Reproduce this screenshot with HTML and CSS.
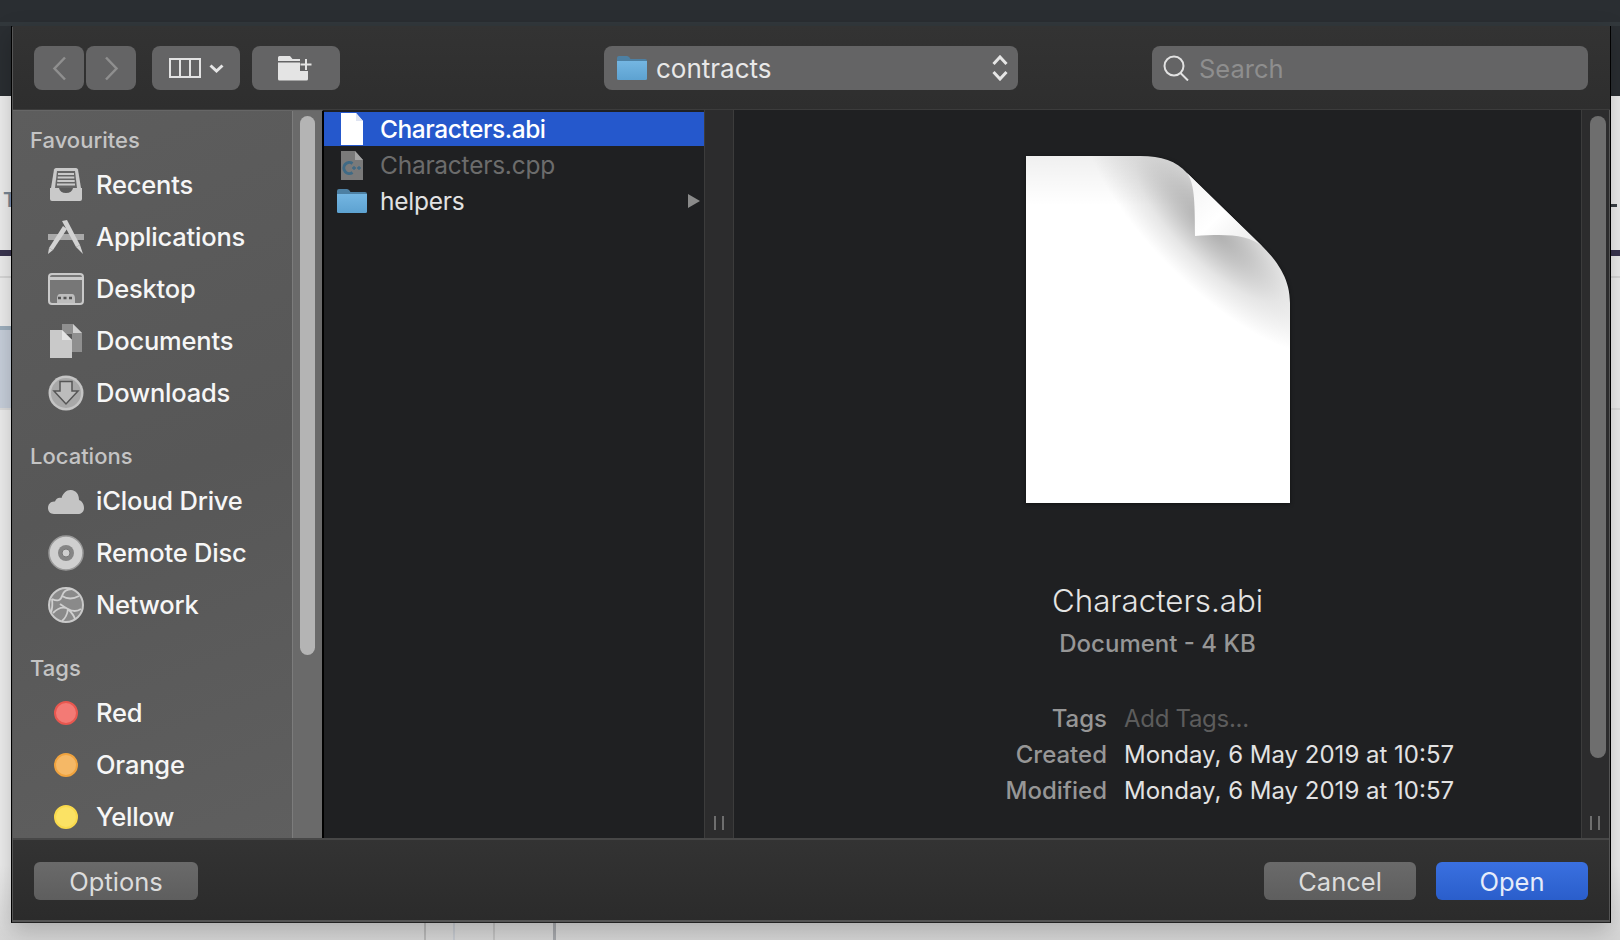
FILE: index.html
```html
<!DOCTYPE html>
<html lang="en">
<head>
  <meta charset="UTF-8" />
  <title>Open</title>
  <link rel="stylesheet" href="styles.css">
</head>
<body>

<!-- page behind the dialog -->
<div class="backdrop">
  <div class="bg-top"></div>
  <div class="bg-top-edge"></div>
  <div class="bg-header"></div>
  <div class="bg-title"><span>T</span><span class="bg-dash"></span></div>
  <div class="bg-rule"></div>
  <div class="bg-line"></div>
  <div class="bg-selected"></div>
  <div class="bg-selected-end"></div>
  <div class="bg-columns">
    <span class="bg-col bg-col-a"></span>
    <span class="bg-col bg-col-b"></span>
    <span class="bg-col bg-col-c"></span>
    <span class="bg-col bg-col-d"></span>
  </div>
</div>

<!-- open dialog -->
<div class="dialog">
  <div class="toolbar">
    <button class="tool tool-nav">
      <svg width="15" height="25" viewBox="0 0 15 25"><path d="M13 1.500 2.500 12.500 13 23.500" class="ico-dim"/></svg>
    </button>
    <button class="tool tool-nav tool-next">
      <svg width="15" height="25" viewBox="0 0 15 25"><path d="M2 1.500 12.500 12.500 2 23.500" class="ico-dim"/></svg>
    </button>
    <button class="tool tool-view">
      <svg width="32" height="20" viewBox="0 0 32 20"><path d="M1 1h30v18H1zM11 1v18M21 1v18" class="ico-line"/></svg>
      <svg width="15" height="9" viewBox="0 0 15 9"><path d="M1.500 1.500 7.500 7 13.500 1.500" class="ico-bold"/></svg>
    </button>
    <button class="tool tool-folder">
      <svg width="36" height="26" viewBox="0 0 36 26">
        <path d="M0 2.500Q0 1 1.500 1H12L14.500 4H22V6H0Z" fill="#e4e4e4"/>
        <path d="M0 7.500H22V16H30V24Q30 25.500 28.500 25.500H1.500Q0 25.500 0 24Z" fill="#e4e4e4"/>
        <path d="M28 4V15M22.500 9.500H33.500" stroke="#e4e4e4" stroke-width="2" fill="none"/>
      </svg>
    </button>
    <div class="popup">
      <svg class="folder-ico" width="30" height="24" viewBox="0 0 30 24"><use href="#folder"/></svg>
      <span class="popup-name">contracts</span>
      <svg class="popup-arrows" width="16" height="26" viewBox="0 0 16 26"><path d="M1.500 9 8 2 14.500 9M1.500 17 8 24 14.500 17" class="ico-bold"/></svg>
    </div>
    <div class="search">
      <svg width="26" height="26" viewBox="0 0 26 26"><circle cx="11" cy="11" r="9.500" class="ico-line"/><path d="M17.500 18 25 25.500" class="ico-line"/></svg>
      <span class="search-hint">Search</span>
    </div>
  </div>

  <div class="main">
    <div class="sidebar">
      <div class="side-list">
        <div class="side-head">Favourites</div>
        <div class="side-row">
          <span class="side-ico"><svg width="36" height="34" viewBox="0 0 36 34">
            <path d="M6 1.500Q6.500 0 8 0H28Q29.500 0 30 1.500L33 20H3Z" fill="#c9c9c9"/>
            <path d="M9 3H27L29 20H7Z" fill="#666"/>
            <path d="M10 6H26M9.700 9.500H26.300M9.300 13H26.700M9 16.500H27" stroke="#c9c9c9" stroke-width="1.800"/>
            <path d="M2 20H11Q12 25 18 25T25 20H34V31Q34 33 32 33H4Q2 33 2 31Z" fill="#c9c9c9"/>
          </svg></span>
          <span class="side-name">Recents</span>
        </div>
        <div class="side-row">
          <span class="side-ico"><svg width="36" height="34" viewBox="0 0 36 34">
            <path d="M0 14H36V20H0Z" fill="#a9a9a9"/>
            <path d="M14 1 19 0 32 25 28 27Z" fill="#d2d2d2"/>
            <path d="M28 27 32 25 35 34 Z" fill="#d2d2d2"/>
            <path d="M15 6 19 9 5 30 1 28Z" fill="#d2d2d2"/>
            <path d="M1 28 5 30 0 34Z" fill="#d2d2d2"/>
          </svg></span>
          <span class="side-name">Applications</span>
        </div>
        <div class="side-row">
          <span class="side-ico"><svg width="36" height="32" viewBox="0 0 36 32">
            <rect x="1" y="1" width="34" height="30" rx="3" fill="#777" stroke="#c9c9c9" stroke-width="2"/>
            <path d="M1 5.500H35" stroke="#c9c9c9" stroke-width="3"/>
            <path d="M9 26Q9 21 12 21H24Q27 21 27 26V30H9Z" fill="#bdbdbd"/>
            <path d="M10 25H26" stroke="#555" stroke-width="2.500" stroke-dasharray="3 2.500"/>
          </svg></span>
          <span class="side-name">Desktop</span>
        </div>
        <div class="side-row">
          <span class="side-ico"><svg width="36" height="34" viewBox="0 0 36 34">
            <path d="M14 0H25L34 9V28H24V10H14Z" fill="#8f8f8f"/>
            <path d="M25 0 34 9H25Z" fill="#d0d0d0"/>
            <path d="M2 6H14L24 16V34H2Z" fill="#c9c9c9"/>
            <path d="M14 6 24 16H14Z" fill="#e4e4e4"/>
          </svg></span>
          <span class="side-name">Documents</span>
        </div>
        <div class="side-row">
          <span class="side-ico"><svg width="36" height="36" viewBox="0 0 36 36">
            <circle cx="18" cy="18" r="17.500" fill="#c4c4c4"/>
            <circle cx="18" cy="18" r="15" fill="#a8a8a8"/>
            <path d="M12 6.500H24V16H30L18 29 6 16H12Z" fill="#bcbcbc" stroke="#555" stroke-width="1.500"/>
          </svg></span>
          <span class="side-name">Downloads</span>
        </div>

        <div class="side-head side-head-gap">Locations</div>
        <div class="side-row">
          <span class="side-ico"><svg width="36" height="25" viewBox="0 0 36 25">
            <path d="M6 25C2 25 0 22 0 19C0 15 3 12 7 12.500C8 9 11 8 13.500 9C15 4 19 .5 23 1C28 1.500 31 5 31 11C34 12 36 15 36 19C36 23 33 25 30 25Z" fill="#c4c4c4"/>
          </svg></span>
          <span class="side-name">iCloud Drive</span>
        </div>
        <div class="side-row">
          <span class="side-ico"><svg width="36" height="36" viewBox="0 0 36 36">
            <circle cx="18" cy="18" r="17" fill="#cfcfcf" stroke="#999" stroke-width="1.500"/>
            <circle cx="18" cy="18" r="8" fill="#858585"/>
            <circle cx="18" cy="18" r="4" fill="#cfcfcf" stroke="#777" stroke-width="1"/>
          </svg></span>
          <span class="side-name">Remote Disc</span>
        </div>
        <div class="side-row">
          <span class="side-ico"><svg width="36" height="36" viewBox="0 0 36 36">
            <circle cx="18" cy="18" r="17" fill="#8a8a8a" stroke="#c9c9c9" stroke-width="2"/>
            <path d="M4 12Q12 16 14 9T24 2M14 9Q22 14 31 9M4 12Q5 20 3 25M5 26Q13 18 20 22T33 22M20 22Q19 30 14 34M20 22Q26 28 27 32M12 17Q16 20 20 22" fill="none" stroke="#cfcfcf" stroke-width="1.800"/>
          </svg></span>
          <span class="side-name">Network</span>
        </div>

        <div class="side-head side-head-gap">Tags</div>
        <div class="side-row">
          <span class="side-ico"><span class="tag tag-red"></span></span>
          <span class="side-name">Red</span>
        </div>
        <div class="side-row">
          <span class="side-ico"><span class="tag tag-orange"></span></span>
          <span class="side-name">Orange</span>
        </div>
        <div class="side-row">
          <span class="side-ico"><span class="tag tag-yellow"></span></span>
          <span class="side-name">Yellow</span>
        </div>
      </div>
      <div class="side-scroll"><div class="side-thumb"></div></div>
    </div>

    <div class="files">
      <div class="file file-selected">
        <svg class="file-ico" width="22" height="33" viewBox="0 0 22 33"><path d="M0 0H15L22 8V32H0Z" fill="#fff"/><path d="M15 0 22 8H15Z" fill="#dfe4f2"/></svg>
        <span>Characters.abi</span>
      </div>
      <div class="file file-off">
        <svg class="file-ico" width="22" height="29" viewBox="0 0 22 29">
          <path d="M0 0H14L22 9V29H0Z" fill="#7a7a7a"/>
          <path d="M14 0 22 9H14Z" fill="#a5a5a5"/>
          <path d="M11.500 12.500A5.500 5.500 0 1 0 11.500 21.500" fill="none" stroke="#3f6a85" stroke-width="3"/>
          <path d="M11 17H15M13 15V19M16 17H20M18 15V19" stroke="#3f6a85" stroke-width="1.300"/>
        </svg>
        <span>Characters.cpp</span>
      </div>
      <div class="file">
        <svg class="file-ico file-ico-folder" width="30" height="24" viewBox="0 0 30 24"><use href="#folder"/></svg>
        <span class="file-name">helpers</span>
        <span class="file-more"></span>
      </div>
    </div>

    <div class="gutter"><span class="grip"></span></div>

    <div class="preview">
      <svg class="doc" width="264" height="347" viewBox="0 0 264 347">
        <defs>
          <radialGradient id="curlShade" gradientUnits="userSpaceOnUse" cx="0" cy="0" r="1" gradientTransform="translate(185 70) rotate(45) scale(170 58)">
            <stop offset="0" stop-color="#aaa"/>
            <stop offset="0.3" stop-color="#c6c6c6"/>
            <stop offset="0.6" stop-color="#e6e6e6"/>
            <stop offset="1" stop-color="#fff"/>
          </radialGradient>
          <linearGradient id="topShade" x1="0" y1="0" x2="0" y2="1">
            <stop offset="0" stop-color="#000" stop-opacity=".06"/>
            <stop offset="1" stop-color="#000" stop-opacity="0"/>
          </linearGradient>
          <linearGradient id="flapShade" x1="0" y1="0" x2="1" y2="1">
            <stop offset="0" stop-color="#f2f2f2"/>
            <stop offset="0.5" stop-color="#fff"/>
            <stop offset="1" stop-color="#e8e8e8"/>
          </linearGradient>
        </defs>
        <path d="M0 0H114C136 0 150 5 161 17L237 91C254 108 264 125 264 147V347H0Z" fill="url(#curlShade)"/>
        <path d="M0 0H114C136 0 150 5 161 17L172 30V50H0Z" fill="url(#topShade)"/>
        <path d="M161 17C168 27 169 42 169 80C200 78 222 78 237 91Z" fill="url(#flapShade)"/>
      </svg>
      <div class="pv-title">Characters.abi</div>
      <div class="pv-kind">Document - 4 KB</div>
      <div class="pv-meta">
        <span class="pv-label">Tags</span><span class="pv-hint">Add Tags...</span>
        <span class="pv-label">Created</span><span>Monday, 6 May 2019 at 10:57</span>
        <span class="pv-label">Modified</span><span>Monday, 6 May 2019 at 10:57</span>
      </div>
    </div>

    <div class="gutter gutter-last">
      <div class="pv-thumb"></div>
      <span class="grip"></span>
    </div>
  </div>

  <div class="footer">
    <button class="btn btn-options">Options</button>
    <button class="btn btn-cancel">Cancel</button>
    <button class="btn btn-open">Open</button>
  </div>
</div>

<!-- shared folder glyph -->
<svg class="defs" width="0" height="0">
  <defs>
    <linearGradient id="folderFill" x1="0" y1="0" x2="0" y2="1">
      <stop offset="0" stop-color="#74b6e2"/>
      <stop offset="1" stop-color="#5da2d1"/>
    </linearGradient>
    <g id="folder">
      <path d="M0 2Q0 0 2 0H10Q11.500 0 12.500 1.500L13.500 3H28Q30 3 30 5V10H0Z" fill="#4d80a3"/>
      <path d="M0 5H30V22.500Q30 24 28.500 24H1.500Q0 24 0 22.500Z" fill="url(#folderFill)"/>
    </g>
  </defs>
</svg>

</body>
</html>
```

FILE: styles.css
```css
* {
  box-sizing: border-box;
}
body {
  margin: 0;
  width: 1620px;
  height: 940px;
  overflow: hidden;
  position: relative;
  font-family: Inter, "Liberation Sans", sans-serif;
  background: #eee;
}
button {
  font-family: inherit;
  border: none;
  padding: 0;
  margin: 0;
}

/* page behind the dialog */
.backdrop {
  height: 940px;
  display: flex;
  flex-direction: column;
  background: linear-gradient(to bottom, #eee 0%, #eee 92%, #d6d6d6 100%);
}
.bg-top { height: 22px; background: #2a2e32; }
.bg-top-edge { height: 4px; background: #32383c; }
.bg-header { height: 70px; background: #2a2e32; }
.bg-title {
  height: 154px;
  padding: 94px 3px 0 3px;
  display: flex;
  justify-content: space-between;
  font-size: 20px;
  line-height: 20px;
  font-weight: 600;
  color: #7a8794;
}
.bg-dash {
  width: 6px;
  height: 3px;
  margin-top: 14px;
  background: #3a3f45;
}
.bg-rule { height: 6px; background: #3a3550; }
.bg-line { height: 2px; margin-top: 20px; background: #d8d8d8; }
.bg-selected {
  height: 82px;
  width: 12px;
  margin-top: 48px;
  background: #c8d0dc;
  border-top: 4px solid #9fb0bf;
}
.bg-selected-end { height: 2px; background: #ddd; }
.bg-columns {
  margin-top: auto;
  height: 20px;
  display: flex;
  padding-left: 424px;
}
.bg-col { width: 2px; background: #b8b8b8; }
.bg-col-b { margin-left: 27px; background: #c6cad0; }
.bg-col-c { margin-left: 38px; background: #c2c2c2; }
.bg-col-d { margin-left: 58px; width: 3px; background: #a6a8ac; }

/* dialog */
.dialog {
  position: absolute;
  left: 11px;
  top: 26px;
  width: 1600px;
  height: 897px;
  padding-left: 1px;
  display: flex;
  flex-direction: column;
  border-left: 1px solid #000;
  border-right: 1px solid #000;
  border-bottom: 1px solid #222;
  outline: 1px solid #555;
  outline-offset: -2px;
  box-shadow: 0 8px 22px rgba(0, 0, 0, .22);
  color: #f2f2f2;
}
.toolbar {
  height: 84px;
  flex: none;
  display: flex;
  padding: 20px 21px 20px 21px;
  background: linear-gradient(to bottom, #333 0%, #2e2e2e 100%);
  border-bottom: 1px solid #3c3c3c;
  position: relative;
}
.tool, .popup, .search {
  height: 44px;
  border-radius: 8px;
  background: #646465;
  display: flex;
  align-items: center;
  justify-content: center;
}
.tool-nav { width: 50px; }
.tool-next { margin-left: 2px; }
.tool-view { width: 88px; margin-left: 16px; gap: 8px; }
.tool-folder { width: 88px; margin-left: 12px; }
.ico-dim { fill: none; stroke: #8f8f8f; stroke-width: 2.5; }
.ico-line { fill: none; stroke: #e2e2e2; stroke-width: 2; }
.ico-bold { fill: none; stroke: #e6e6e6; stroke-width: 3; }

.popup {
  width: 414px;
  margin-left: 264px;
  justify-content: flex-start;
  padding: 0 10px 0 13px;
  font-size: 26px;
  color: #e8e8e8;
}
.popup-name { margin-left: 9px; }
.popup-arrows { margin-left: auto; margin-right: 0; }

.search {
  width: 436px;
  margin-left: 134px;
  justify-content: flex-start;
  padding-left: 11px;
  font-size: 25.5px;
}
.search-hint { margin-left: 10px; color: #8e8e8e; }

.main {
  height: 728px;
  flex: none;
  display: flex;
  overflow: hidden;
}

/* sidebar */
.sidebar {
  width: 311px;
  flex: none;
  display: flex;
  border-right: 2px solid #000;
  background: linear-gradient(160deg, #5d5d5d 0%, #575757 50%, #5f5f5f 100%);
  border-top: 1px solid #666;
}
.side-list {
  width: 279px;
  flex: none;
  padding: 14px 0 0 17px;
  font-size: 25.5px;
  letter-spacing: -.2px;
  font-weight: 500;
}
.side-head {
  height: 30px;
  line-height: 30px;
  margin-bottom: 4px;
  font-size: 22px;
  letter-spacing: 0;
  color: #c4c4c4;
}
.side-head-gap { margin-top: 22px; }
.side-row {
  height: 52px;
  display: flex;
  align-items: center;
  color: #f6f6f6;
}
.side-name { margin-top: -2px; }
.side-ico {
  width: 36px;
  margin-left: 18px;
  margin-right: 12px;
  display: flex;
  align-items: center;
  justify-content: center;
  flex: none;
}
.tag {
  width: 24px;
  height: 24px;
  border-radius: 50%;
  border-width: 2px;
  border-style: solid;
}
.tag-red { background: #f37a75; border-color: #e8574f; }
.tag-orange { background: #f5b866; border-color: #f0a33e; }
.tag-yellow { background: #fbe264; border-color: #f9da4c; }
.side-scroll {
  flex: 1;
  background: #6a6a6a;
  border-left: 1px solid #7c7c7c;
  padding: 5px 7px 0;
}
.side-thumb {
  height: 539px;
  border-radius: 8px;
  background: #b4b4b4;
}

/* file column */
.files {
  width: 380px;
  flex: none;
  padding-top: 2px;
  background: #1f2022;
  font-size: 24.5px;
  letter-spacing: -.25px;
}
.file {
  height: 34px;
  margin-bottom: 2px;
  display: flex;
  align-items: center;
  padding-left: 17px;
  color: #e2e2e2;
  position: relative;
}
.file-ico { flex: none; margin-right: 17px; }
.file-ico-folder { margin-left: -4px; margin-right: 13px; }
.file-selected {
  background: #2558cc;
  color: #fff;
  font-weight: 500;
  letter-spacing: -.45px;
}
.file-off { color: #6c6c6c; }
.file-more {
  margin-left: auto;
  margin-right: 4px;
  width: 0;
  height: 0;
  border-left: 12px solid #8a8a8a;
  border-top: 7px solid transparent;
  border-bottom: 7px solid transparent;
}

.gutter {
  width: 30px;
  flex: none;
  display: flex;
  flex-direction: column;
  justify-content: flex-end;
  padding: 0 0 8px 9px;
  background: #2c2c2d;
  border-left: 1px solid #3c3c3c;
  border-right: 1px solid #3c3c3c;
}
.grip {
  display: block;
  width: 10px;
  height: 14px;
  border-left: 2px solid #6e6e6e;
  border-right: 2px solid #6e6e6e;
}
.gutter-last {
  width: 29px;
  border-right: none;
  padding-left: 8px;
  padding-top: 6px;
}
.pv-thumb {
  width: 16px;
  height: 642px;
  margin-bottom: auto;
  border-radius: 8px;
  background: #6e6e6e;
}

/* preview */
.preview {
  flex: 1;
  padding-top: 46px;
  display: flex;
  flex-direction: column;
  align-items: center;
  background: #1f2022;
}
.doc {
  flex: none;
  filter: drop-shadow(0 1px 2px rgba(0, 0, 0, .45));
}
.pv-title {
  margin-top: 78px;
  height: 40px;
  line-height: 40px;
  font-size: 31.3px;
  font-weight: 300;
  color: #e4e4e4;
}
.pv-kind {
  margin-top: 8px;
  height: 30px;
  line-height: 30px;
  font-size: 24px;
  font-weight: 500;
  color: #969696;
}
.pv-meta {
  align-self: stretch;
  margin-top: 41px;
  display: grid;
  grid-template-columns: 373px 1fr;
  column-gap: 17px;
  grid-auto-rows: 36px;
  align-items: center;
  font-size: 24px;
  color: #e2e2e2;
}
.pv-label {
  text-align: right;
  font-weight: 500;
  color: #969696;
}
.pv-hint { color: #5c5c5c; letter-spacing: -.3px; }

/* footer */
.footer {
  flex: 1;
  display: flex;
  padding: 22px 22px 0 21px;
  background: linear-gradient(to bottom, #333 0%, #2b2b2b 100%);
  border-top: 2px solid #474747;
  border-bottom: 2px solid #555;
}
.btn {
  height: 38px;
  border-radius: 6px;
  font-size: 25.5px;
  color: #dcdcdc;
  background: linear-gradient(to bottom, #6a6a6a 0%, #5e5e5e 100%);
}
.btn-options { width: 164px; }
.btn-cancel { width: 152px; margin-left: auto; }
.btn-open {
  width: 152px;
  margin-left: 20px;
  color: #e6ecfa;
  background: linear-gradient(to bottom, #3a70e0 0%, #2a5ecb 100%);
}
.defs { position: absolute; }
```
